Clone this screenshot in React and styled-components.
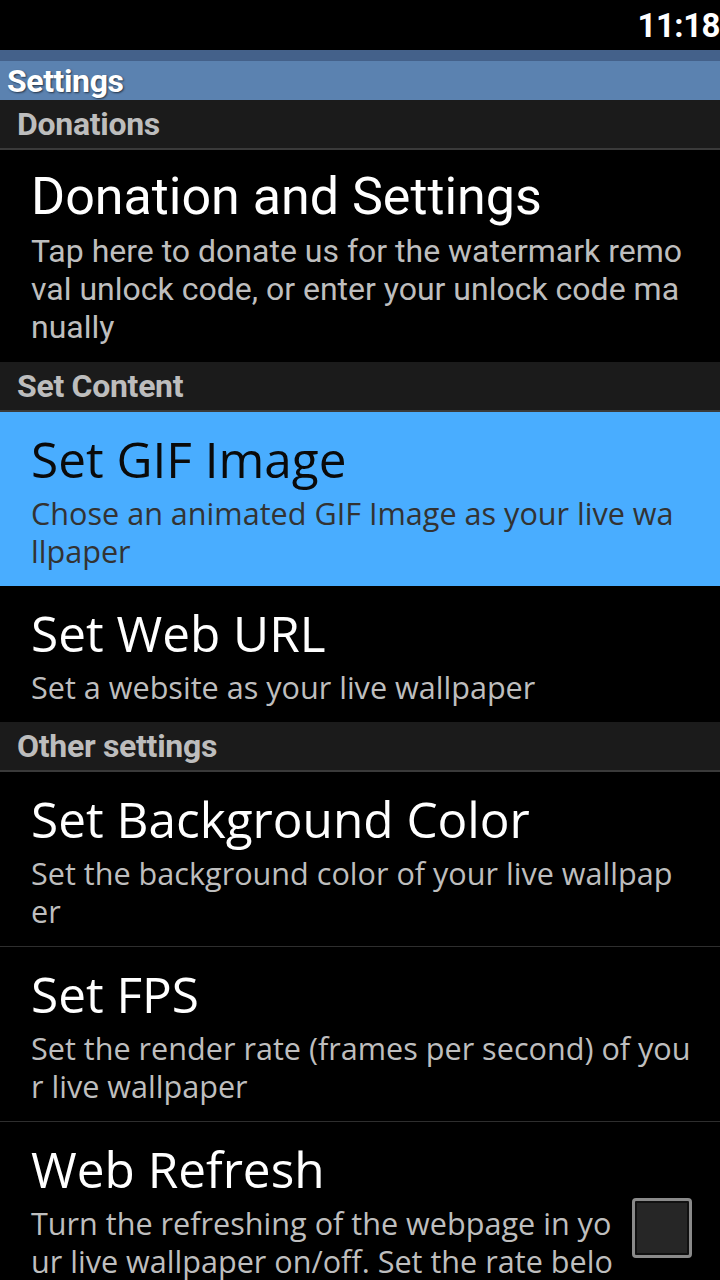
import React from "react";
import styled, { createGlobalStyle } from "styled-components";

const GlobalStyle = createGlobalStyle`
  html, body {
    margin: 0;
    padding: 0;
    background: #000;
  }
  body {
    width: 720px;
    height: 1280px;
    overflow: hidden;
  }
`;

const Screen = styled.div`
  width: 720px;
  height: 1280px;
  background: #000;
  overflow: hidden;
  display: flex;
  flex-direction: column;

  & > * {
    flex-shrink: 0;
  }
`;

const StatusBar = styled.div`
  height: 50px;
  background: #000;
  display: flex;
  align-items: center;
  justify-content: flex-end;
  color: #fff;
  font-family: Roboto, "Liberation Sans", sans-serif;
  font-weight: 700;
  font-size: 33px;
  letter-spacing: -0.5px;
`;

const TitleBar = styled.div`
  height: 39px;
  border-top: 11px solid #44618a;
  background: #5b82b0;
  display: flex;
  align-items: center;
  padding-left: 7px;
  color: #fff;
  font-family: Roboto, "Liberation Sans", sans-serif;
  font-weight: 700;
  font-size: 32px;
  letter-spacing: -0.4px;
  text-shadow: 1px 1px 2px rgba(0, 0, 0, 0.6);
`;

const Category = styled.div`
  height: 48px;
  border-bottom: 2px solid #3a3a3a;
  background: #1b1b1b;
  display: flex;
  align-items: center;
  padding-left: 17px;
  color: #bdbdbd;
  font-family: Roboto, "Liberation Sans", sans-serif;
  font-weight: 700;
  font-size: 32px;
  letter-spacing: -0.3px;
`;

const Item = styled.div`
  display: flex;
  align-items: center;
  padding: 15px 0 16px 31px;
  background: ${(p) => (p.$selected ? "#49adff" : "#000")};
  border-bottom: ${(p) => (p.$divider ? "1px solid #2e2e2e" : "none")};
`;

const ItemText = styled.div`
  flex: 1;
  min-width: 0;
  display: flex;
  flex-direction: column;
`;

const ItemTitle = styled.div`
  font-family: ${(p) => (p.$roboto ? "Roboto" : "'Open Sans'")}, "Liberation Sans", sans-serif;
  font-size: ${(p) => (p.$roboto ? "52px" : "49.5px")};
  line-height: 64px;
  margin-bottom: 3px;
  color: ${(p) => (p.$selected ? "#0a0a0a" : "#fff")};
  white-space: nowrap;
`;

const ItemSummary = styled.div`
  font-family: ${(p) => (p.$roboto ? "Roboto" : "'Open Sans'")}, "Liberation Sans", sans-serif;
  font-size: ${(p) => (p.$roboto ? "32px" : "30.6px")};
  line-height: 38px;
  color: ${(p) => (p.$selected ? "#333" : "#bebebe")};
  white-space: pre;
`;

const CheckBox = styled.div`
  width: 54px;
  height: 54px;
  margin-right: 28px;
  border: 3px solid #8a8a8a;
  border-radius: 4px;
  background: #262626;
  box-shadow: inset 0 0 0 2px #111;
  flex-shrink: 0;
`;

const items = [
  { type: "cat", label: "Donations" },
  {
    title: "Donation and Settings",
    summary:
      "Tap here to donate us for the watermark remo\nval unlock code, or enter your unlock code ma\nnually",
    roboto: true,
  },
  { type: "cat", label: "Set Content" },
  {
    title: "Set GIF Image",
    summary: "Chose an animated GIF Image as your live wa\nllpaper",
    selected: true,
  },
  { title: "Set Web URL", summary: "Set a website as your live wallpaper" },
  { type: "cat", label: "Other settings" },
  {
    title: "Set Background Color",
    summary: "Set the background color of your live wallpap\ner",
    divider: true,
  },
  {
    title: "Set FPS",
    summary: "Set the render rate (frames per second) of you\nr live wallpaper",
    divider: true,
  },
  {
    title: "Web Refresh",
    summary:
      "Turn the refreshing of the webpage in yo\nur live wallpaper on/off. Set the rate belo\nw",
    checkbox: true,
  },
];

const App = () => (
  <>
    <GlobalStyle />
    <Screen>
      <StatusBar>11:18</StatusBar>
      <TitleBar>Settings</TitleBar>
      {items.map((it, i) =>
        it.type === "cat" ? (
          <Category key={i}>{it.label}</Category>
        ) : (
          <Item key={i} $selected={it.selected} $divider={it.divider}>
            <ItemText>
              <ItemTitle $selected={it.selected} $roboto={it.roboto}>
                {it.title}
              </ItemTitle>
              <ItemSummary $selected={it.selected} $roboto={it.roboto}>
                {it.summary}
              </ItemSummary>
            </ItemText>
            {it.checkbox && <CheckBox />}
          </Item>
        )
      )}
    </Screen>
  </>
);

export default App;
